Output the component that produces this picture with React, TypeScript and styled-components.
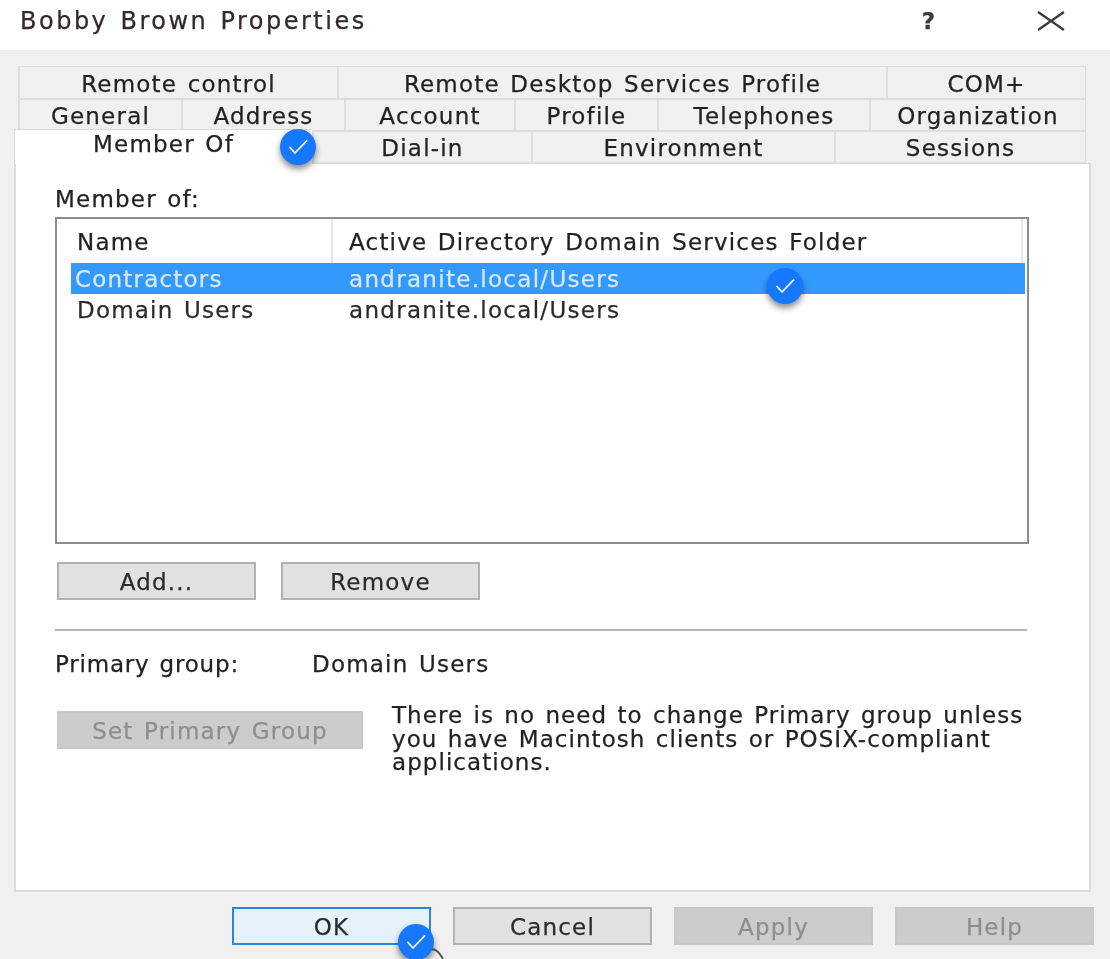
import React from "react";
import styled, { createGlobalStyle } from "styled-components";

const Global = createGlobalStyle`
  html, body { margin: 0; padding: 0; background: #fff; }
  body { font-family: "DejaVu Sans", "Open Sans", sans-serif; color: #222; }
`;

const Window = styled.div`
  position: relative;
  width: 1110px;
  height: 959px;
  overflow: hidden;
  display: flex;
  flex-direction: column;
  background: #f0f0f0;
  filter: blur(0.65px);
  font-size: 23px;
  letter-spacing: 1.2px;
  word-spacing: 2px;
  -webkit-text-stroke: 0.25px currentColor;
`;

const TitleBar = styled.header`
  height: 50px;
  flex: none;
  box-sizing: border-box;
  padding: 0 44px 8px 20px;
  background: #fff;
  display: flex;
  align-items: center;
`;

const Title = styled.div`
  flex: 1;
  font-size: 24px;
  letter-spacing: 2.5px;
  word-spacing: 2px;
  color: #33282b;
`;

const HelpMark = styled.span`
  width: 22px;
  margin-right: 96px;
  text-align: center;
  font-weight: 700;
  font-size: 23px;
  color: #3d3d3d;
`;

const TabStrip = styled.div`
  margin-top: 16px;
  display: flex;
  flex-direction: column;
  position: relative;
  z-index: 1;
`;

const TabRow = styled.div<{ $left: number; $h: number }>`
  display: flex;
  height: ${(p) => p.$h}px;
  padding-left: ${(p) => p.$left}px;
  align-items: flex-end;
`;

const Tab = styled.div<{ $w: number }>`
  width: ${(p) => p.$w}px;
  height: 100%;
  box-sizing: border-box;
  padding-top: 2px;
  display: flex;
  align-items: center;
  justify-content: center;
  background: #f0f0f0;
  border: 1px solid #dedede;
  border-left-width: 2px;
  border-right: none;
  white-space: nowrap;
  &:last-child { border-right: 1px solid #dedede; }
`;

const ActiveTab = styled.div<{ $w: number }>`
  width: ${(p) => p.$w}px;
  height: 35px;
  margin-bottom: -1px;
  padding-bottom: 7px;
  box-sizing: border-box;
  display: flex;
  align-items: center;
  justify-content: center;
  background: #fff;
  border-top: 1px solid #dcdcdc;
  border-left: 1px solid #dcdcdc;
  white-space: nowrap;
`;

const Panel = styled.main`
  box-sizing: border-box;
  height: 729px;
  margin: 0 19px 0 14px;
  padding: 19px 60px 0 39px;
  background: #fff;
  border: 2px solid #dcdcdc;
  border-top-width: 1px;
  display: flex;
  flex-direction: column;
`;

const FieldLabel = styled.div`
  height: 34px;
  line-height: 32px;
`;

const ListBox = styled.div`
  box-sizing: border-box;
  height: 327px;
  border: 2px solid #8c8c8c;
  display: flex;
  flex-direction: column;
`;

const ListHeader = styled.div`
  flex: none;
  height: 44px;
  display: flex;
  padding-right: 4px;
`;

const HeaderCell = styled.div<{ $w?: number }>`
  box-sizing: border-box;
  ${(p) => (p.$w ? `width: ${p.$w}px;` : "flex: 1;")}
  padding-left: ${(p) => (p.$w ? 20 : 16)}px;
  line-height: 46px;
  border-right: 2px solid #e6e6e6;
  white-space: nowrap;
`;

const ListRow = styled.div<{ $selected?: boolean }>`
  height: 31px;
  margin: 0 2px 0 14px;
  display: flex;
  line-height: 32px;
  background: ${(p) => (p.$selected ? "#3399ff" : "transparent")};
  color: ${(p) => (p.$selected ? "#d7e9fb" : "#2b2b2b")};
`;

const NameCell = styled.div<{ $selected?: boolean }>`
  box-sizing: border-box;
  width: 260px;
  padding-left: ${(p) => (p.$selected ? 4 : 6)}px;
`;

const FolderCell = styled.div`
  padding-left: 18px;
  letter-spacing: 1.3px;
`;

const ButtonRow = styled.div`
  display: flex;
  gap: 25px;
  margin: 18px 0 0 2px;
`;

const Button = styled.div<{ $w?: number; $disabled?: boolean; $default?: boolean }>`
  box-sizing: border-box;
  flex: none;
  width: ${(p) => p.$w ?? 199}px;
  height: 38px;
  padding-top: 2px;
  display: flex;
  align-items: center;
  justify-content: center;
  white-space: nowrap;
  background: ${(p) => (p.$default ? "#e5f1fb" : p.$disabled ? "#cccccc" : "#e1e1e1")};
  border: 2px solid ${(p) => (p.$default ? "#2f86d6" : p.$disabled ? "#c8c8c8" : "#b2b2b2")};
  color: ${(p) => (p.$disabled ? "#8e8e8e" : "#2b2b2b")};
`;

const Divider = styled.hr`
  margin: 29px 0 0;
  width: 972px;
  height: 2px;
  border: none;
  background: #b4b4b4;
`;

const PrimaryRow = styled.div`
  display: flex;
  margin-top: 17px;
  height: 32px;
  line-height: 32px;
`;

const PrimaryLabel = styled.div`
  width: 257px;
  letter-spacing: 0.8px;
`;

const PrimaryNote = styled.div`
  display: flex;
  margin: 31px 0 0 2px;
  gap: 29px;
`;

const Note = styled.p`
  margin: -7px 0 0;
  width: 650px;
  line-height: 23.5px;
  letter-spacing: 1.05px;
`;

const Footer = styled.footer`
  flex: none;
  height: 67px;
  box-sizing: border-box;
  padding: 15px 0 0 232px;
  display: flex;
  gap: 22px;
`;

const Badge = styled.div<{ $x: number; $y: number }>`
  position: absolute;
  left: ${(p) => p.$x - 18}px;
  top: ${(p) => p.$y - 18}px;
  width: 36px;
  height: 36px;
  border-radius: 50%;
  background: #1677ff;
  box-shadow: 0 4px 6px rgba(0, 0, 0, 0.45);
  display: flex;
  align-items: center;
  justify-content: center;
  z-index: 3;
`;

const Pointer = styled.svg`
  position: absolute;
  left: 425px;
  top: 945px;
  z-index: 2;
`;

const CloseIcon = styled.svg`
  margin-top: -1px;
`;

const Check = () => (
  <svg width="22" height="18" viewBox="0 0 22 18" fill="none">
    <path d="M3 9.5l5 5.5L19.5 3" stroke="#fff" strokeWidth="1.8" strokeLinecap="round" strokeLinejoin="round" />
  </svg>
);

const row1: [string, number][] = [
  ["Remote control", 319],
  ["Remote Desktop Services Profile", 549],
  ["COM+", 200],
];
const row2: [string, number][] = [
  ["General", 163],
  ["Address", 163],
  ["Account", 170],
  ["Profile", 143],
  ["Telephones", 212],
  ["Organization", 217],
];
const row3: [string, number][] = [
  ["Dial-in", 219],
  ["Environment", 303],
  ["Sessions", 252],
];

export default function App() {
  return (
    <Window>
      <Global />
      <TitleBar>
        <Title>Bobby Brown Properties</Title>
        <HelpMark>?</HelpMark>
        <CloseIcon width="30" height="20" viewBox="0 0 30 20" fill="none">
          <path d="M2 1l26 18M28 1L2 19" stroke="#3a3a3a" strokeWidth="2.2" />
        </CloseIcon>
      </TitleBar>
      <TabStrip>
        <TabRow $left={18} $h={33}>
          {row1.map(([t, w]) => (
            <Tab key={t} $w={w}>{t}</Tab>
          ))}
        </TabRow>
        <TabRow $left={18} $h={32}>
          {row2.map(([t, w]) => (
            <Tab key={t} $w={w}>{t}</Tab>
          ))}
        </TabRow>
        <TabRow $left={14} $h={32}>
          <ActiveTab $w={298}>Member Of</ActiveTab>
          {row3.map(([t, w]) => (
            <Tab key={t} $w={w}>{t}</Tab>
          ))}
        </TabRow>
      </TabStrip>
      <Panel>
        <FieldLabel>Member of:</FieldLabel>
        <ListBox>
          <ListHeader>
            <HeaderCell $w={276}>Name</HeaderCell>
            <HeaderCell>Active Directory Domain Services Folder</HeaderCell>
          </ListHeader>
          <ListRow $selected>
            <NameCell $selected>Contractors</NameCell>
            <FolderCell>andranite.local/Users</FolderCell>
          </ListRow>
          <ListRow>
            <NameCell>Domain Users</NameCell>
            <FolderCell>andranite.local/Users</FolderCell>
          </ListRow>
        </ListBox>
        <ButtonRow>
          <Button>Add...</Button>
          <Button>Remove</Button>
        </ButtonRow>
        <Divider />
        <PrimaryRow>
          <PrimaryLabel>Primary group:</PrimaryLabel>
          <div>Domain Users</div>
        </PrimaryRow>
        <PrimaryNote>
          <Button $w={306} $disabled>Set Primary Group</Button>
          <Note>
            There is no need to change Primary group unless you have Macintosh clients or POSIX-compliant applications.
          </Note>
        </PrimaryNote>
      </Panel>
      <Footer>
        <Button $default>OK</Button>
        <Button>Cancel</Button>
        <Button $disabled>Apply</Button>
        <Button $disabled>Help</Button>
      </Footer>
      <Badge $x={298} $y={147}><Check /></Badge>
      <Badge $x={785} $y={286}><Check /></Badge>
      <Badge $x={416} $y={942}><Check /></Badge>
      <Pointer width="24" height="14" viewBox="0 0 24 14" fill="none">
        <path d="M2 5c8-3 12 2 16 9" stroke="#555" strokeWidth="2" />
      </Pointer>
    </Window>
  );
}
